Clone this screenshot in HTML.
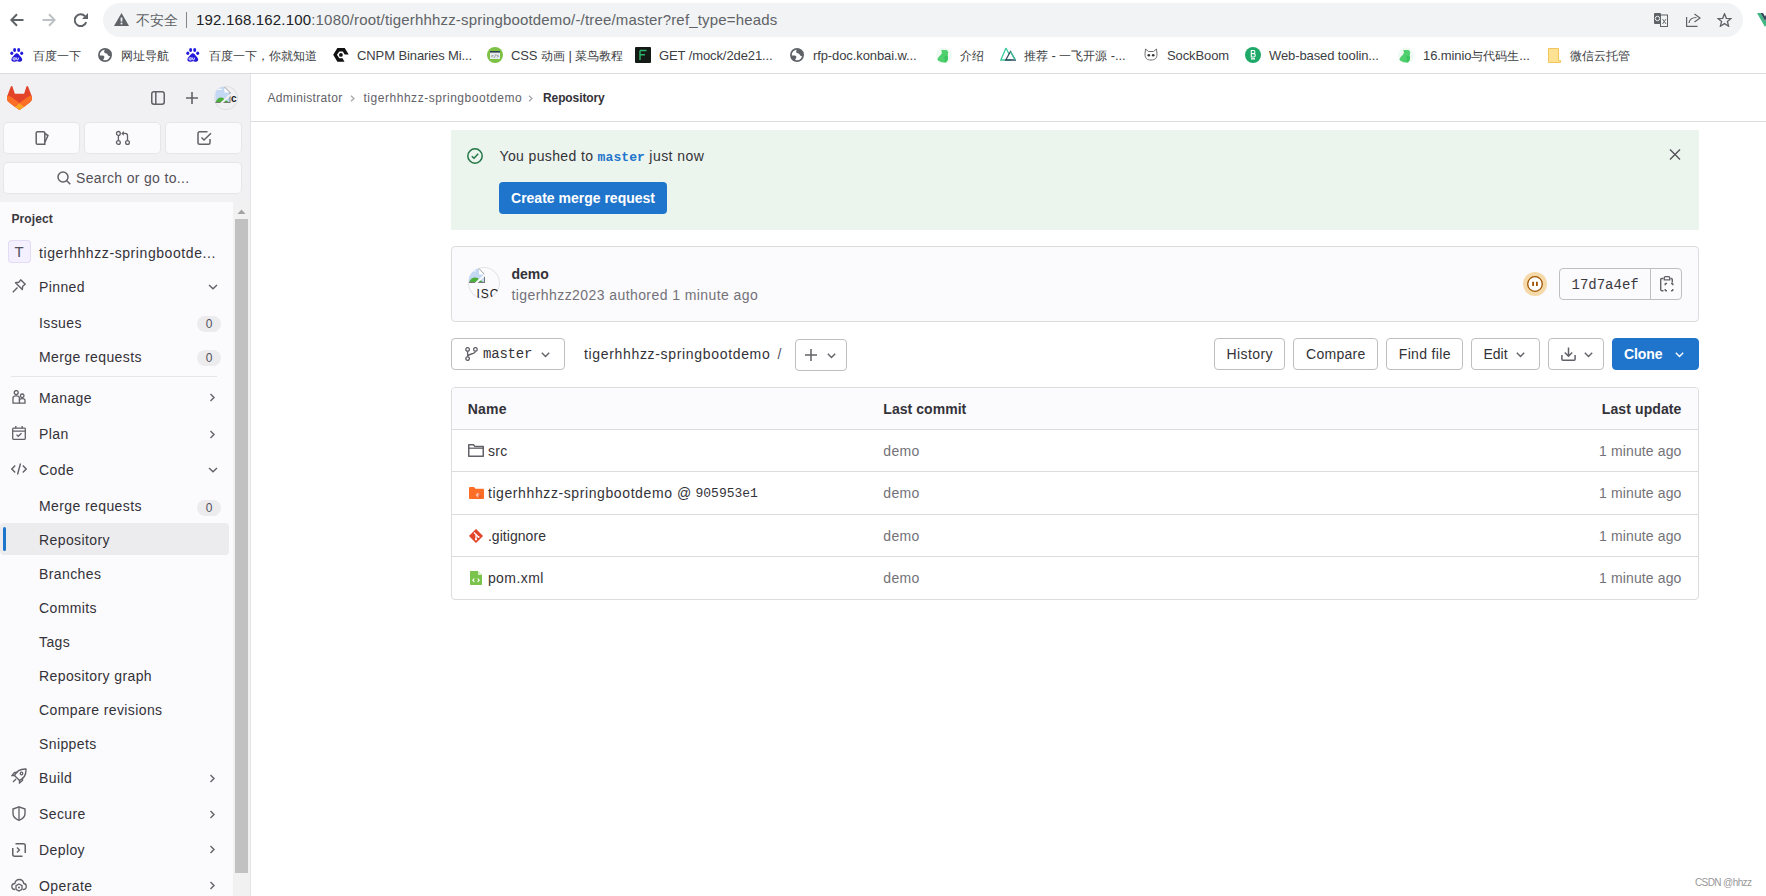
<!DOCTYPE html>
<html><head><meta charset="utf-8">
<style>
*{box-sizing:border-box}
html,body{margin:0;padding:0;width:1766px;height:896px;overflow:hidden;background:#fff;font-family:"Liberation Sans",sans-serif;color:#333238}
.a{position:absolute;white-space:nowrap}
svg{display:block}
/* browser chrome */
#chrome{position:absolute;left:0;top:0;width:1766px;height:74px;background:#fff;border-bottom:1px solid #dadce0}
#omni{position:absolute;left:103px;top:3px;width:1640px;height:34px;border-radius:17px;background:#f1f3f4}
.bm{position:absolute;top:47px;font-size:13px;letter-spacing:-0.1px;color:#3c4043;white-space:nowrap;line-height:18px}
.cj{font-size:12px;letter-spacing:0}
.bmi{position:absolute;top:48px}
/* sidebar */
#sb{position:absolute;left:0;top:74px;width:251px;height:822px;background:#f1f1f3;border-right:1px solid #e4e4e7}
.sbtn{position:absolute;top:49px;height:30px;width:75px;background:#fbfafd;border-radius:4px;box-shadow:0 0 0 1px #e6e6ea}
#panel{position:absolute;left:0;top:128px;width:233px;height:694px;background:#fbfafd}
.ni{position:absolute;left:39px;font-size:14px;color:#333238;white-space:nowrap;line-height:16px}
.badge{position:absolute;left:197px;width:24px;height:16px;border-radius:8px;background:#ececef;font-size:12px;color:#535158;text-align:center;line-height:16px}
.ico{position:absolute;left:11px}
.chev{position:absolute;left:207px}
/* main */
.btn{position:absolute;top:338px;height:32px;border:1px solid #bfbfc3;border-radius:4px;background:#fff;font-size:14px;color:#333238;line-height:30px;text-align:center;white-space:nowrap}
</style></head><body>

<div id="chrome">
  <svg class="a" style="left:10px;top:13px" width="14" height="14" viewBox="0 0 14 14"><path d="M13.5 7H1.5M7 1.3L1.3 7 7 12.7" fill="none" stroke="#5f6368" stroke-width="2"/></svg>
  <svg class="a" style="left:42px;top:13px" width="14" height="14" viewBox="0 0 14 14"><path d="M0.5 7H12.5M7 1.3L12.7 7 7 12.7" fill="none" stroke="#bdc1c6" stroke-width="2"/></svg>
  <svg class="a" style="left:74px;top:13px" width="14" height="14" viewBox="0 0 14 14"><path d="M12.2 9.2A5.9 5.9 0 1 1 11 3.2" fill="none" stroke="#5f6368" stroke-width="2"/><path d="M14 0V6H8Z" fill="#5f6368"/></svg>
  <div id="omni">
    <svg class="a" style="left:11px;top:10px" width="15" height="13" viewBox="0 0 15 13"><path d="M7.5 0L15 13H0Z" fill="#5f6368"/><rect x="6.6" y="4.5" width="1.8" height="4" fill="#f1f3f4"/><rect x="6.6" y="9.6" width="1.8" height="1.8" fill="#f1f3f4"/></svg>
    <div class="a" style="left:33px;top:9px;font-size:14px;line-height:16px;color:#5f6368">不安全</div>
    <div class="a" style="left:83px;top:9px;width:1px;height:16px;background:#80868b"></div>
    <div class="a" style="left:93px;top:8px;font-size:15px;line-height:18px;letter-spacing:0.175px;color:#5f6368"><span style="color:#202124">192.168.162.100</span>:1080/root/tigerhhhzz-springbootdemo/-/tree/master?ref_type=heads</div>
    <svg class="a" style="left:1551px;top:10px" width="14" height="14" viewBox="0 0 14 14"><rect x="0" y="0" width="7" height="11" rx="1" fill="#5f6368"/><circle cx="3.5" cy="5.5" r="2.2" fill="none" stroke="#f1f3f4" stroke-width="1"/><rect x="6.5" y="2" width="7" height="11.5" fill="none" stroke="#5f6368" stroke-width="1"/><path d="M8.5 6L12 11M12 6L8.5 11" stroke="#5f6368" stroke-width="0.9"/></svg>
    <svg class="a" style="left:1583px;top:10px" width="15" height="14" viewBox="0 0 15 14"><path d="M0.6 4V13.4H11.5" fill="none" stroke="#5f6368" stroke-width="1.2"/><path d="M3 10C3.5 6 6.5 4.5 10.5 4.5M8.5 1L14 5L8.5 9" fill="none" stroke="#5f6368" stroke-width="1.2"/></svg>
    <svg class="a" style="left:1614px;top:10px" width="15" height="14" viewBox="0 0 15 14"><path d="M7.5 0.8L9.3 5.3 14 5.5 10.4 8.5 11.6 13.2 7.5 10.6 3.4 13.2 4.6 8.5 1 5.5 5.7 5.3Z" fill="none" stroke="#5f6368" stroke-width="1.3" stroke-linejoin="miter"/></svg>
  </div>
  <svg class="a" style="left:1757px;top:13px" width="16" height="14" viewBox="0 0 16 14"><path d="M0 0H3.5L8 8 12.5 0H16L8 14Z" fill="#41b883"/><path d="M3.5 0H6L8 3.5 10 0H12.5L8 8Z" fill="#35495e"/></svg>

  <svg class="bmi" style="left:10px" width="14" height="14" viewBox="0 0 14 14"><ellipse cx="4.6" cy="2" rx="1.5" ry="1.9" fill="#2319dc"/><ellipse cx="8.7" cy="2" rx="1.5" ry="1.9" fill="#2319dc"/><ellipse cx="1.8" cy="5.2" rx="1.5" ry="1.8" fill="#2319dc"/><ellipse cx="11.7" cy="5.2" rx="1.5" ry="1.8" fill="#2319dc"/><path d="M6.9 5.3C5.5 5.3 4.5 6.8 3.5 8 2 9.5 1.4 10.5 1.4 11.8 1.4 13 2.5 13.7 4 13.7 5.5 13.7 6 13.2 6.9 13.2 7.8 13.2 8.5 13.7 10 13.7 11.5 13.7 12.2 12.8 12.2 11.8 12.2 10.5 11.5 9.5 10 8 9 6.8 8.3 5.3 6.9 5.3Z" fill="#2319dc"/><path d="M5.2 9.5V11.9H3.8C3.1 11.9 3 11.3 3 10.7 3 10.1 3.3 9.9 3.8 9.9H5.2M6.6 9.6V11.2C6.6 11.7 6.9 11.9 7.4 11.9 7.9 11.9 8.3 11.7 8.3 11.2V9.6" fill="none" stroke="#fff" stroke-width="0.9"/></svg>
  <div class="bm" style="left:33px"><span class="cj">百度一下</span></div>
  <svg class="bmi" style="left:98px" width="14" height="14" viewBox="0 0 14 14"><circle cx="7" cy="7" r="6.1" fill="none" stroke="#5f6368" stroke-width="1.7"/><path d="M7.5 1C6.5 2 5.8 3.5 6.3 4.6 7 5.6 8.5 5.2 9.2 6 10 7 10.5 8.6 12 8.3L13.5 7.2V4L11 1.5Z" fill="#5f6368"/><path d="M1 7.6H4.6C5.8 7.6 6.6 8.4 6.3 9.6 6 10.6 5.3 11.4 5 12.8L3.5 13 1 10.5Z" fill="#5f6368"/></svg>
  <div class="bm" style="left:121px"><span class="cj">网址导航</span></div>
  <svg class="bmi" style="left:186px" width="14" height="14" viewBox="0 0 14 14"><ellipse cx="4.6" cy="2" rx="1.5" ry="1.9" fill="#2319dc"/><ellipse cx="8.7" cy="2" rx="1.5" ry="1.9" fill="#2319dc"/><ellipse cx="1.8" cy="5.2" rx="1.5" ry="1.8" fill="#2319dc"/><ellipse cx="11.7" cy="5.2" rx="1.5" ry="1.8" fill="#2319dc"/><path d="M6.9 5.3C5.5 5.3 4.5 6.8 3.5 8 2 9.5 1.4 10.5 1.4 11.8 1.4 13 2.5 13.7 4 13.7 5.5 13.7 6 13.2 6.9 13.2 7.8 13.2 8.5 13.7 10 13.7 11.5 13.7 12.2 12.8 12.2 11.8 12.2 10.5 11.5 9.5 10 8 9 6.8 8.3 5.3 6.9 5.3Z" fill="#2319dc"/><path d="M5.2 9.5V11.9H3.8C3.1 11.9 3 11.3 3 10.7 3 10.1 3.3 9.9 3.8 9.9H5.2M6.6 9.6V11.2C6.6 11.7 6.9 11.9 7.4 11.9 7.9 11.9 8.3 11.7 8.3 11.2V9.6" fill="none" stroke="#fff" stroke-width="0.9"/></svg>
  <div class="bm" style="left:209px"><span class="cj">百度一下，你就知道</span></div>
  <svg class="bmi" style="left:333px" width="16" height="14" viewBox="0 0 16 14"><path d="M0.2 6.8L4.4 0.05H11.7L15.7 6.6H11.7L9.8 3.4H6.3L4 6.8 6.3 10.3H9.5L11.5 13.7H4.4Z" fill="#111"/><circle cx="7.9" cy="6.9" r="1.9" fill="#111"/></svg>
  <div class="bm" style="left:357px">CNPM Binaries Mi...</div>
  <svg class="bmi" style="left:487px;top:47px" width="16" height="16" viewBox="0 0 16 16"><circle cx="8" cy="8" r="8" fill="#7cc144"/><rect x="3" y="4" width="10" height="8" fill="#e8ecee"/><rect x="3" y="4" width="10" height="1.6" fill="#2f3f4f"/><text x="8" y="10.8" font-size="4.5" fill="#2f3f4f" text-anchor="middle" font-family="Liberation Mono">&lt;/&gt;</text></svg>
  <div class="bm" style="left:511px">CSS <span class="cj">动画</span> | <span class="cj">菜鸟教程</span></div>
  <svg class="bmi" style="left:635px;top:47px" width="16" height="16" viewBox="0 0 16 16"><rect width="16" height="16" rx="1" fill="#141a16"/><path d="M5 3.5V13M5 3.5H11.5M5 7.8H10" stroke="#2fb36a" stroke-width="1.4" fill="none"/></svg>
  <div class="bm" style="left:659px">GET /mock/2de21...</div>
  <svg class="bmi" style="left:790px" width="14" height="14" viewBox="0 0 14 14"><circle cx="7" cy="7" r="6.1" fill="none" stroke="#5f6368" stroke-width="1.7"/><path d="M7.5 1C6.5 2 5.8 3.5 6.3 4.6 7 5.6 8.5 5.2 9.2 6 10 7 10.5 8.6 12 8.3L13.5 7.2V4L11 1.5Z" fill="#5f6368"/><path d="M1 7.6H4.6C5.8 7.6 6.6 8.4 6.3 9.6 6 10.6 5.3 11.4 5 12.8L3.5 13 1 10.5Z" fill="#5f6368"/></svg>
  <div class="bm" style="left:813px">rfp-doc.konbai.w...</div>
  <svg class="bmi" style="left:936px;top:47px" width="16" height="16" viewBox="0 0 16 16"><circle cx="8" cy="8.5" r="8" fill="#f0f9f2"/><path d="M5.3 3.1H10.7L12.2 5.1 11.8 8C12.3 10 12.2 12.3 11.4 13.8 10.5 15.3 9 15.7 7.8 15.6 5 15.3 2.5 14 1.4 12.7 1.8 11.2 2.8 10 3.6 9.1 4.8 7.8 5.9 7 5.9 5.5Z" fill="#4fcf6e"/><path d="M8.5 9C10 8.5 11.5 9 11.8 10.5 12 12.5 11.3 14.5 9.5 15.4 8 15.8 9 13 8.5 9Z" fill="#3cc45f"/></svg>
  <div class="bm" style="left:960px"><span class="cj">介绍</span></div>
  <svg class="bmi" style="left:1000px;top:47px" width="16" height="14" viewBox="0 0 16 14"><path d="M6 1L0.8 13H11.5" fill="none" stroke="#3cc99c" stroke-width="1.3"/><path d="M6 1L9 7" fill="none" stroke="#3cc99c" stroke-width="1.3"/><path d="M10.5 4.5L15.3 13H5.7Z" fill="none" stroke="#35495e" stroke-width="1.3"/><path d="M10.5 4.5L15.3 13" fill="none" stroke="#3cc99c" stroke-width="1.3"/></svg>
  <div class="bm" style="left:1024px"><span class="cj">推荐</span> - <span class="cj">一飞开源</span> -...</div>
  <svg class="bmi" style="left:1144px" width="14" height="14" viewBox="0 0 14 14"><path d="M1.5 1L4.5 3.5H9.5L12.5 1 13 6C13 10.5 11 12 7 12S1 10.5 1 6Z" fill="#fff" stroke="#707070" stroke-width="1"/><ellipse cx="4.8" cy="7.3" rx="1.3" ry="1.2" fill="#333"/><ellipse cx="9.2" cy="7.3" rx="1.3" ry="1.2" fill="#333"/></svg>
  <div class="bm" style="left:1167px">SockBoom</div>
  <svg class="bmi" style="left:1245px;top:47px" width="16" height="16" viewBox="0 0 16 16"><circle cx="8" cy="8" r="8" fill="#1ea968"/><path d="M6.3 3.5H8.8C10.2 3.5 10.2 6.6 8.8 6.6H6.3ZM6.3 6.6H9C10.6 6.6 10.6 10 9 10H6.3Z" fill="none" stroke="#fff" stroke-width="1.1"/><rect x="6" y="11.2" width="4" height="1.3" fill="#fff"/></svg>
  <div class="bm" style="left:1269px">Web-based toolin...</div>
  <svg class="bmi" style="left:1398px;top:47px" width="16" height="16" viewBox="0 0 16 16"><circle cx="8" cy="8.5" r="8" fill="#f0f9f2"/><path d="M5.3 3.1H10.7L12.2 5.1 11.8 8C12.3 10 12.2 12.3 11.4 13.8 10.5 15.3 9 15.7 7.8 15.6 5 15.3 2.5 14 1.4 12.7 1.8 11.2 2.8 10 3.6 9.1 4.8 7.8 5.9 7 5.9 5.5Z" fill="#4fcf6e"/><path d="M8.5 9C10 8.5 11.5 9 11.8 10.5 12 12.5 11.3 14.5 9.5 15.4 8 15.8 9 13 8.5 9Z" fill="#3cc45f"/></svg>
  <div class="bm" style="left:1423px">16.minio<span class="cj">与代码生</span>...</div>
  <svg class="bmi" style="left:1548px" width="13" height="15" viewBox="0 0 13 15"><path d="M0.5 0.5H10.5V12.5H12.5V14.5H0.5Z" fill="#fde293" stroke="#f2c55c" stroke-width="1"/></svg>
  <div class="bm" style="left:1570px"><span class="cj">微信云托管</span></div>
</div>

<div id="sb">
  <svg class="a" style="left:7px;top:11.5px" width="25" height="24" viewBox="0 0 25 24"><path fill="#E24329" d="m24.507 9.5-.034-.09L21.082.562a.896.896 0 0 0-1.694.091l-2.29 7.01H7.825L5.535.653a.898.898 0 0 0-1.694-.09L.451 9.411.416 9.5a6.297 6.297 0 0 0 2.09 7.278l.012.01.03.022 5.160 3.867 2.560 1.935 1.554 1.176a1.051 1.051 0 0 0 1.268 0l1.555-1.176 2.560-1.935 5.197-3.890.014-.01A6.297 6.297 0 0 0 24.507 9.5Z"/><path fill="#FC6D26" d="m24.507 9.5-.034-.09a11.440 11.440 0 0 0-4.560 2.051l-7.447 5.632 4.742 3.584 5.197-3.890.014-.01A6.297 6.297 0 0 0 24.507 9.5Z"/><path fill="#FCA326" d="m7.707 20.677 2.560 1.935 1.555 1.176a1.051 1.051 0 0 0 1.268 0l1.555-1.176 2.560-1.935-4.743-3.584-4.755 3.584Z"/><path fill="#FC6D26" d="M5.010 11.461a11.430 11.430 0 0 0-4.560-2.050L.416 9.500a6.297 6.297 0 0 0 2.090 7.278l.012.010.030.022 5.160 3.867 4.745-3.584-7.444-5.632Z"/></svg>
  <svg class="a" style="left:151px;top:17px" width="14" height="14" viewBox="0 0 14 14"><rect x="0.75" y="0.75" width="12.5" height="12.5" rx="2.2" fill="none" stroke="#626168" stroke-width="1.5"/><path d="M4.8 1V13" stroke="#626168" stroke-width="1.5"/></svg>
  <svg class="a" style="left:186px;top:18px" width="12" height="12" viewBox="0 0 12 12"><path d="M6 0V12M0 6H12" stroke="#626168" stroke-width="1.6"/></svg>
  <div class="a" style="left:214px;top:12px;width:24px;height:24px;border-radius:12px;box-shadow:inset 0 0 0 1px #e0e0e4;overflow:hidden">
    <svg class="a" style="left:0;top:0" width="24" height="24" viewBox="0 0 24 24"><path d="M1.5 1H10.5L16 6.5V16.5H1.5Z" fill="#c4d8f4"/><path d="M3 4C3 3 4.5 2.5 5.5 3 6.5 2 8 2.5 8 4Z" fill="#fff" opacity="0.8"/><path d="M10.5 1V6.5H16" fill="#fff"/><path d="M10.5 1L16 6.5" stroke="#888" stroke-width="0.8"/><path d="M1.5 16.5C3 12 7 10 10.5 13L8 16.5Z" fill="#4caf3b"/><path d="M11.5 14L15.5 16.5H9.5Z" fill="#4caf3b"/><path d="M1.5 16.5H16.3M16 6.5V16.5" stroke="#777" stroke-width="1"/><path d="M6.5 18L17 8" stroke="#f1f1f3" stroke-width="2"/><text x="17" y="15.5" font-size="10" font-weight="bold" fill="#222" font-family="Liberation Sans">c</text></svg>
  </div>
  <div class="sbtn" style="left:4px"><svg class="a" style="left:31px;top:8px" width="14" height="14" viewBox="0 0 14 14"><path d="M2.5 0.8H8.5C9.3 0.8 9.8 1.3 9.8 2.1V13.2H2.5C1.7 13.2 1.2 12.7 1.2 11.9V2.1C1.2 1.3 1.7 0.8 2.5 0.8Z" fill="none" stroke="#626168" stroke-width="1.5"/><path d="M9.8 2.5L13 4.5 10 11" fill="none" stroke="#626168" stroke-width="1.5" stroke-linejoin="round"/></svg></div>
  <div class="sbtn" style="left:85px"><svg class="a" style="left:30px;top:7px" width="16" height="16" viewBox="0 0 16 16"><circle cx="3.4" cy="3.4" r="1.9" fill="none" stroke="#626168" stroke-width="1.3"/><circle cx="3.4" cy="12.5" r="1.9" fill="none" stroke="#626168" stroke-width="1.3"/><circle cx="12.5" cy="12.5" r="1.9" fill="none" stroke="#626168" stroke-width="1.3"/><path d="M3.4 5.3V10.6M12.5 10.6V5.6C12.5 4.2 11.6 3.4 10.2 3.4H8" fill="none" stroke="#626168" stroke-width="1.3"/><path d="M6.2 3.4L8.8 1V5.8Z" fill="#626168"/></svg></div>
  <div class="sbtn" style="left:166px"><svg class="a" style="left:31px;top:8px" width="15" height="14" viewBox="0 0 15 14"><path d="M10.5 0.8H2.5C1.6 0.8 1 1.4 1 2.3V11.7C1 12.6 1.6 13.2 2.5 13.2H11.5C12.4 13.2 13 12.6 13 11.7V8" fill="none" stroke="#626168" stroke-width="1.5"/><path d="M4.5 6.5L7 9 14 2.2" fill="none" stroke="#626168" stroke-width="1.5"/></svg></div>
  <div class="a" style="left:4px;top:89px;width:237px;height:30px;background:#fbfafd;border-radius:4px;box-shadow:0 0 0 1px #e6e6ea"></div>
  <svg class="a" style="left:57px;top:97px" width="14" height="14" viewBox="0 0 14 14"><circle cx="6" cy="6" r="5" fill="none" stroke="#626168" stroke-width="1.5"/><path d="M9.5 9.5L13.3 13.3" stroke="#626168" stroke-width="1.5"/></svg>
  <div class="a" style="left:76px;top:96px;font-size:14px;line-height:16px;letter-spacing:0.34px;color:#535158">Search or go to...</div>
  <div id="panel">
    <div class="a" style="left:11.5px;top:10px;font-size:12px;font-weight:bold;line-height:14px;letter-spacing:0.1px;color:#3a3940">Project</div>
  </div>
  <div class="a" style="left:7.5px;top:166px;width:23px;height:23px;border-radius:4px;background:#f4f0ff;box-shadow:inset 0 0 0 1px #e3dcf5;font-size:15px;line-height:23px;text-align:center;color:#535158">T</div>
  <div class="ni" style="top:170.6px;letter-spacing:0.58px">tigerhhhzz-springbootde...</div>
  <svg class="a" style="left:12px;top:205px" width="14" height="14" viewBox="0 0 14 14"><path d="M8.7 0.8L13.2 5.3 10.7 7.2 10.3 10.5 3.5 3.7 6.8 3.3Z" fill="none" stroke="#626168" stroke-width="1.4" stroke-linejoin="round"/><path d="M5.5 8.5L0.8 13.2" stroke="#626168" stroke-width="1.4"/></svg>
  <div class="ni" style="top:205px;letter-spacing:0.4px">Pinned</div>
  <svg class="a" style="left:208px;top:210.3px" width="10" height="6" viewBox="0 0 10 6"><path d="M1 1L5 4.8 9 1" fill="none" stroke="#626168" stroke-width="1.4"/></svg>
  <div class="ni" style="top:241px;letter-spacing:0.4px">Issues</div>
  <div class="badge" style="top:242px">0</div>
  <div class="ni" style="top:275.3px;letter-spacing:0.4px">Merge requests</div>
  <div class="badge" style="top:276px">0</div>
  <div class="a" style="left:11px;top:302px;width:206px;height:1px;background:#e6e6ea"></div>
  <svg class="a" style="left:12px;top:316px" width="14" height="14" viewBox="0 0 14 14"><circle cx="4.2" cy="2.6" r="2" fill="none" stroke="#626168" stroke-width="1.3"/><path d="M1 13.2V7.8C1 6.5 2 5.8 4.2 5.8S7.4 6.5 7.4 7.8V13.2Z" fill="none" stroke="#626168" stroke-width="1.3" stroke-linejoin="round"/><circle cx="10.2" cy="5.8" r="1.8" fill="none" stroke="#626168" stroke-width="1.3"/><path d="M7.4 13.2H13V10.5C13 9.3 12 8.6 10.2 8.6S7.4 9.3 7.4 10.5" fill="none" stroke="#626168" stroke-width="1.3" stroke-linejoin="round"/></svg>
  <div class="ni" style="top:316px;letter-spacing:0.4px">Manage</div>
  <svg class="a" style="left:209px;top:319.4px" width="7" height="9" viewBox="0 0 7 9"><path d="M1.5 1L5 4.5 1.5 8" fill="none" stroke="#626168" stroke-width="1.4"/></svg>
  <svg class="a" style="left:12px;top:352px" width="14" height="14" viewBox="0 0 14 14"><rect x="0.7" y="2.2" width="12.6" height="11.1" rx="0.8" fill="none" stroke="#626168" stroke-width="1.3"/><path d="M0.7 5.2H13.3M3.8 0V2.5M10.2 0V2.5" stroke="#626168" stroke-width="1.3"/><path d="M4.5 8.6L6.3 10.3 9.5 7.2" fill="none" stroke="#626168" stroke-width="1.3"/></svg>
  <div class="ni" style="top:352px;letter-spacing:0.4px">Plan</div>
  <svg class="a" style="left:209px;top:355.5px" width="7" height="9" viewBox="0 0 7 9"><path d="M1.5 1L5 4.5 1.5 8" fill="none" stroke="#626168" stroke-width="1.4"/></svg>
  <svg class="a" style="left:11px;top:389px" width="16" height="12" viewBox="0 0 16 12"><path d="M4.2 2.5L0.8 6 4.2 9.5M11.8 2.5L15.2 6 11.8 9.5M9.5 0.5L6.5 11.5" fill="none" stroke="#626168" stroke-width="1.4"/></svg>
  <div class="ni" style="top:387.7px;letter-spacing:0.4px">Code</div>
  <svg class="a" style="left:208px;top:392.9px" width="10" height="6" viewBox="0 0 10 6"><path d="M1 1L5 4.8 9 1" fill="none" stroke="#626168" stroke-width="1.4"/></svg>
  <div class="ni" style="top:424px;letter-spacing:0.4px">Merge requests</div>
  <div class="badge" style="top:425.5px">0</div>
  <div class="a" style="left:0px;top:449px;width:229px;height:32px;border-radius:4px;background:#ececef"></div>
  <div class="a" style="left:3px;top:453px;width:3px;height:23.5px;border-radius:2px;background:#1f75cb"></div>
  <div class="ni" style="top:458px;letter-spacing:0.4px">Repository</div>
  <div class="ni" style="top:492px;letter-spacing:0.4px">Branches</div>
  <div class="ni" style="top:526px;letter-spacing:0.4px">Commits</div>
  <div class="ni" style="top:559.6px;letter-spacing:0.4px">Tags</div>
  <div class="ni" style="top:593.6px;letter-spacing:0.4px">Repository graph</div>
  <div class="ni" style="top:628px;letter-spacing:0.4px">Compare revisions</div>
  <div class="ni" style="top:662px;letter-spacing:0.4px">Snippets</div>
  <svg class="a" style="left:11px;top:694px" width="16" height="16" viewBox="0 0 16 16"><path d="M6 10L3.5 7.5C5.5 3 9.5 0.8 15 1 15.2 6.5 13 10.5 8.5 12.5Z" fill="none" stroke="#626168" stroke-width="1.4" stroke-linejoin="round"/><circle cx="10.5" cy="5.5" r="1.3" fill="none" stroke="#626168" stroke-width="1.3"/><path d="M3.5 7.5L1 7.5 3.5 4.5H6.5M8.5 12.5V15L11.5 12.5V9.5M5 11L2 14" fill="none" stroke="#626168" stroke-width="1.3"/></svg>
  <div class="ni" style="top:696px;letter-spacing:0.4px">Build</div>
  <svg class="a" style="left:209px;top:699.5px" width="7" height="9" viewBox="0 0 7 9"><path d="M1.5 1L5 4.5 1.5 8" fill="none" stroke="#626168" stroke-width="1.4"/></svg>
  <svg class="a" style="left:12px;top:732px" width="14" height="15" viewBox="0 0 14 15"><path d="M7 0.8L13 3V7.5C13 10.5 10.5 13 7 14.3 3.5 13 1 10.5 1 7.5V3Z" fill="none" stroke="#626168" stroke-width="1.4" stroke-linejoin="round"/><path d="M7 0.8V14.3" stroke="#626168" stroke-width="1.3"/></svg>
  <div class="ni" style="top:732px;letter-spacing:0.4px">Secure</div>
  <svg class="a" style="left:209px;top:735.5px" width="7" height="9" viewBox="0 0 7 9"><path d="M1.5 1L5 4.5 1.5 8" fill="none" stroke="#626168" stroke-width="1.4"/></svg>
  <svg class="a" style="left:12px;top:769px" width="14" height="14" viewBox="0 0 14 14"><path d="M0.75 5V11.3C0.75 12.4 1.6 13.25 2.7 13.25H10.5" fill="none" stroke="#626168" stroke-width="1.5"/><path d="M3.5 0.75H11.3C12.4 0.75 13.25 1.6 13.25 2.7V10" fill="none" stroke="#626168" stroke-width="1.5"/><path d="M5 4.6L7.4 7 5 9.4" fill="none" stroke="#626168" stroke-width="1.4"/></svg>
  <div class="ni" style="top:768px;letter-spacing:0.4px">Deploy</div>
  <svg class="a" style="left:209px;top:771.3px" width="7" height="9" viewBox="0 0 7 9"><path d="M1.5 1L5 4.5 1.5 8" fill="none" stroke="#626168" stroke-width="1.4"/></svg>
  <svg class="a" style="left:11px;top:804px" width="16" height="16" viewBox="0 0 16 16"><path d="M4 11.5C1.8 11.5 0.8 10 0.8 8.5S2 5.5 3.8 5.5C4.3 3 6 1.5 8.3 1.5S12.3 3 12.8 5.5C14.5 5.7 15.3 7 15.3 8.5S14 11.5 12 11.5" fill="none" stroke="#626168" stroke-width="1.3"/><path d="M8 6L11 7.7V11.3L8 13 5 11.3V7.7Z" fill="none" stroke="#626168" stroke-width="1.3"/><circle cx="8" cy="9.5" r="1" fill="#626168"/></svg>
  <div class="ni" style="top:804px;letter-spacing:0.4px">Operate</div>
  <svg class="a" style="left:209px;top:807.3px" width="7" height="9" viewBox="0 0 7 9"><path d="M1.5 1L5 4.5 1.5 8" fill="none" stroke="#626168" stroke-width="1.4"/></svg>
  <div class="a" style="left:233px;top:128px;width:17px;height:694px;background:#f1f1f1"></div>
  <div class="a" style="left:235px;top:145px;width:13px;height:654px;background:#c1c1c1"></div>
  <svg class="a" style="left:237px;top:135px" width="9" height="5" viewBox="0 0 9 5"><path d="M0.5 5L4.5 0.5 8.5 5Z" fill="#a3a3a3"/></svg>
</div>

<div id="main">
  <div class="a" style="left:251px;top:121px;width:1515px;height:1px;background:#dcdcde"></div>
  <div class="a" style="left:267.5px;top:89.5px;font-size:12px;line-height:16px;letter-spacing:0.33px;color:#626168">Administrator</div>
  <svg class="a" style="left:349.5px;top:95px" width="6" height="7" viewBox="0 0 6 7"><path d="M1 0.8L4 3.5 1 6.2" fill="none" stroke="#a4a3a8" stroke-width="1.2"/></svg>
  <div class="a" style="left:363.5px;top:89.5px;font-size:12px;line-height:16px;letter-spacing:0.53px;color:#626168">tigerhhhzz-springbootdemo</div>
  <svg class="a" style="left:528px;top:95px" width="6" height="7" viewBox="0 0 6 7"><path d="M1 0.8L4 3.5 1 6.2" fill="none" stroke="#a4a3a8" stroke-width="1.2"/></svg>
  <div class="a" style="left:543px;top:89.5px;font-size:12px;font-weight:bold;line-height:16px;letter-spacing:-0.1px;color:#333238">Repository</div>

  <div class="a" style="left:451px;top:130px;width:1248px;height:100px;background:#ecf4ee"></div>
  <svg class="a" style="left:467px;top:148px" width="16" height="16" viewBox="0 0 16 16"><circle cx="8" cy="8" r="7.2" fill="none" stroke="#217645" stroke-width="1.5"/><path d="M4.8 8.2L7 10.3 11.2 5.8" fill="none" stroke="#217645" stroke-width="1.5"/></svg>
  <div class="a" style="left:499.5px;top:147.8px;font-size:14px;line-height:16px;color:#333238"><span style="letter-spacing:0.37px">You pushed to </span><span style="font-family:'Liberation Mono',monospace;font-size:13px;font-weight:bold;letter-spacing:0.1px;color:#1f75cb">master</span><span style="letter-spacing:0.45px"> just now</span></div>
  <svg class="a" style="left:1669px;top:149px" width="12" height="11" viewBox="0 0 12 11"><path d="M1 0.5L11 10.5M11 0.5L1 10.5" stroke="#535158" stroke-width="1.4"/></svg>
  <div class="a" style="left:499px;top:182px;width:168px;height:32px;border-radius:4px;background:#1f75cb;color:#fff;font-size:14px;font-weight:bold;line-height:32px;text-align:center">Create merge request</div>

  <div class="a" style="left:451px;top:246px;width:1248px;height:76px;background:#fbfafd;border:1px solid #dcdcde;border-radius:4px"></div>
  <div class="a" style="left:468px;top:267px;width:32px;height:32px;border-radius:16px;box-shadow:inset 0 0 0 1px #e4e4e8;overflow:hidden">
    <svg class="a" style="left:0;top:0" width="32" height="32" viewBox="0 0 32 32"><path d="M1 2H11L16.5 7.5V15.5H1Z" fill="#c4d8f4"/><path d="M3 4.5C3 3.5 4.5 3 5.5 3.5 6.5 2.5 8 3 8 4.5Z" fill="#fff" opacity="0.8"/><path d="M11 1.5V7.5H16.5" fill="#fff"/><path d="M11 1.5L16.5 7.5" stroke="#888" stroke-width="0.8"/><path d="M1 15.5C2.5 11 7 9 11 12L8 15.5Z" fill="#4caf3b"/><path d="M12 13L16 15.5H10Z" fill="#4caf3b"/><path d="M1 15.5H17M16.5 7.5V15.5" stroke="#777" stroke-width="1"/><path d="M7 17L17.5 7.5" stroke="#fbfafd" stroke-width="2"/><text x="8.5" y="31" font-size="12" fill="#222" font-family="Liberation Sans" letter-spacing="1">ISC</text></svg>
  </div>
  <div class="a" style="left:511.5px;top:266.3px;font-size:14px;font-weight:bold;line-height:16px;color:#333238">demo</div>
  <div class="a" style="left:511.5px;top:287px;font-size:14px;line-height:16px;letter-spacing:0.42px;color:#737278">tigerhhzz2023 authored 1 minute ago</div>
  <div class="a" style="left:1523px;top:272px;width:24px;height:24px;border-radius:12px;background:#f5d9a8"></div>
  <svg class="a" style="left:1527px;top:276px" width="16" height="16" viewBox="0 0 16 16"><circle cx="8" cy="8" r="7.3" fill="#fff" stroke="#9e5400" stroke-width="1.3"/><path d="M6.1 5.8V10.1M9.9 5.8V10.1" stroke="#9e5400" stroke-width="1.8"/></svg>
  <div class="a" style="left:1559px;top:268px;width:123px;height:32px;border:1px solid #bfbfc3;border-radius:4px;background:transparent"></div>
  <div class="a" style="left:1650px;top:268px;width:1px;height:32px;background:#bfbfc3"></div>
  <div class="a" style="left:1571.5px;top:277.3px;font-family:'Liberation Mono',monospace;font-size:14px;line-height:16px;color:#3a3940">17d7a4ef</div>
  <svg class="a" style="left:1659.5px;top:276px" width="14" height="16" viewBox="0 0 14 16"><path d="M3.5 2.5H1.8C1.1 2.5 0.7 2.9 0.7 3.6V13.6C0.7 14.3 1.1 14.7 1.8 14.7H3.5M10.5 2.5H11.2C11.9 2.5 12.3 2.9 12.3 3.6V6.5" fill="none" stroke="#626168" stroke-width="1.4"/><path d="M4.3 3.8V1.8C4.3 1.1 4.7 0.7 5.4 0.7H8.6C9.3 0.7 9.7 1.1 9.7 1.8V3.8Z" fill="none" stroke="#626168" stroke-width="1.3"/><path d="M5.2 9.3V8.2C5.2 7.8 5.5 7.5 5.9 7.5H7M11 7.5H12.1C12.5 7.5 12.8 7.8 12.8 8.2V9.3M12.8 13V14.1C12.8 14.5 12.5 14.8 12.1 14.8H11M7 14.8H5.9C5.5 14.8 5.2 14.5 5.2 14.1V13" fill="none" stroke="#626168" stroke-width="1.4"/></svg>
  <div class="a" style="left:451px;top:338px;width:114px;height:32px;border:1px solid #bfbfc3;border-radius:4px;background:#fff"></div>
  <svg class="a" style="left:464.5px;top:347px" width="13" height="14" viewBox="0 0 13 14"><circle cx="2.6" cy="2.4" r="1.8" fill="none" stroke="#626168" stroke-width="1.3"/><circle cx="10.4" cy="2.4" r="1.8" fill="none" stroke="#626168" stroke-width="1.3"/><circle cx="2.6" cy="11.6" r="1.8" fill="none" stroke="#626168" stroke-width="1.3"/><path d="M2.6 4.2V9.8M10.4 4.2C10.4 7.5 2.6 6.5 2.6 9.5" fill="none" stroke="#626168" stroke-width="1.3"/></svg>
  <div class="a" style="left:483px;top:346px;font-family:'Liberation Mono',monospace;font-size:14px;line-height:16px;letter-spacing:-0.2px;color:#333238">master</div>
  <svg class="a" style="left:540.8px;top:351.5px" width="9" height="6" viewBox="0 0 9 6"><path d="M0.8 0.8L4.5 4.5 8.2 0.8" fill="none" stroke="#626168" stroke-width="1.4"/></svg>
  <div class="a" style="left:584px;top:346px;font-size:14px;line-height:16px;letter-spacing:0.67px;color:#333238;">tigerhhhzz-springbootdemo</div>
  <div class="a" style="left:777.5px;top:346px;font-size:14px;line-height:16px;letter-spacing:0px;color:#535158;">/</div>
  <div class="a" style="left:795px;top:339px;width:52px;height:32px;border:1px solid #bfbfc3;border-radius:4px;background:#fff"></div>
  <svg class="a" style="left:805px;top:349px" width="12" height="12" viewBox="0 0 12 12"><path d="M6 0V12M0 6H12" stroke="#626168" stroke-width="1.5"/></svg>
  <svg class="a" style="left:826.5px;top:352.5px" width="9" height="6" viewBox="0 0 9 6"><path d="M0.8 0.8L4.5 4.5 8.2 0.8" fill="none" stroke="#626168" stroke-width="1.4"/></svg>
  <div class="a" style="left:1214px;top:338px;width:71px;height:32px;border:1px solid #bfbfc3;border-radius:4px;background:#fff"></div>
  <div class="a" style="left:1226.5px;top:346px;font-size:14px;line-height:16px;letter-spacing:0.42px;color:#333238;">History</div>
  <div class="a" style="left:1293px;top:338px;width:85px;height:32px;border:1px solid #bfbfc3;border-radius:4px;background:#fff"></div>
  <div class="a" style="left:1306px;top:346px;font-size:14px;line-height:16px;letter-spacing:0.28px;color:#333238;">Compare</div>
  <div class="a" style="left:1386px;top:338px;width:77px;height:32px;border:1px solid #bfbfc3;border-radius:4px;background:#fff"></div>
  <div class="a" style="left:1398.8px;top:346px;font-size:14px;line-height:16px;letter-spacing:0.33px;color:#333238;">Find file</div>
  <div class="a" style="left:1471px;top:338px;width:69px;height:32px;border:1px solid #bfbfc3;border-radius:4px;background:#fff"></div>
  <div class="a" style="left:1483.4px;top:346px;font-size:14px;line-height:16px;letter-spacing:0px;color:#333238;">Edit</div>
  <svg class="a" style="left:1515.5px;top:351.8px" width="9" height="6" viewBox="0 0 9 6"><path d="M0.8 0.8L4.5 4.5 8.2 0.8" fill="none" stroke="#626168" stroke-width="1.4"/></svg>
  <div class="a" style="left:1548px;top:338px;width:56px;height:32px;border:1px solid #bfbfc3;border-radius:4px;background:#fff"></div>
  <svg class="a" style="left:1560.5px;top:347px" width="15" height="14" viewBox="0 0 15 14"><path d="M7.5 0.5V9M3.8 5.5L7.5 9.2 11.2 5.5M0.9 8V12.2C0.9 12.8 1.3 13.2 1.9 13.2H13.1C13.7 13.2 14.1 12.8 14.1 12.2V8" fill="none" stroke="#626168" stroke-width="1.5"/></svg>
  <svg class="a" style="left:1583.8px;top:351.8px" width="9" height="6" viewBox="0 0 9 6"><path d="M0.8 0.8L4.5 4.5 8.2 0.8" fill="none" stroke="#626168" stroke-width="1.4"/></svg>
  <div class="a" style="left:1612px;top:338px;width:87px;height:32px;border:1px solid #1f75cb;border-radius:4px;background:#1f75cb"></div>
  <div class="a" style="left:1624px;top:346px;font-size:14px;line-height:16px;letter-spacing:-0.1px;color:#fff;font-weight:bold">Clone</div>
  <svg class="a" style="left:1675px;top:351.8px" width="9" height="6" viewBox="0 0 9 6"><path d="M0.8 0.8L4.5 4.5 8.2 0.8" fill="none" stroke="#fff" stroke-width="1.4"/></svg>
  <div class="a" style="left:451px;top:387px;width:1248px;height:213px;border:1px solid #dcdcde;border-radius:4px;background:#fff;overflow:hidden"><div style="height:42px;background:#fbfafd;border-bottom:1px solid #dcdcde"></div></div>
  <div class="a" style="left:452px;top:471px;width:1246px;height:1px;background:#dcdcde"></div>
  <div class="a" style="left:452px;top:514px;width:1246px;height:1px;background:#dcdcde"></div>
  <div class="a" style="left:452px;top:556px;width:1246px;height:1px;background:#dcdcde"></div>
  <div class="a" style="left:467.8px;top:401px;font-size:14px;line-height:16px;letter-spacing:0.2px;color:#333238;font-weight:bold">Name</div>
  <div class="a" style="left:883.3px;top:401px;font-size:14px;line-height:16px;letter-spacing:0.05px;color:#333238;font-weight:bold">Last commit</div>
  <div class="a" style="left:1400px;top:401px;width:281.5px;text-align:right;font-size:14px;line-height:16px;font-weight:bold;letter-spacing:0.1px;color:#333238">Last update</div>
  <div class="a" style="left:883.3px;top:443px;font-size:14px;line-height:16px;letter-spacing:0.3px;color:#737278;">demo</div>
  <div class="a" style="left:1400px;top:443px;width:1681.5px;font-size:14px;line-height:16px;letter-spacing:0.12px;color:#737278;left:1500px;width:181.5px;text-align:right">1 minute ago</div>
  <div class="a" style="left:883.3px;top:485px;font-size:14px;line-height:16px;letter-spacing:0.3px;color:#737278;">demo</div>
  <div class="a" style="left:1400px;top:485px;width:1681.5px;font-size:14px;line-height:16px;letter-spacing:0.12px;color:#737278;left:1500px;width:181.5px;text-align:right">1 minute ago</div>
  <div class="a" style="left:883.3px;top:528px;font-size:14px;line-height:16px;letter-spacing:0.3px;color:#737278;">demo</div>
  <div class="a" style="left:1400px;top:528px;width:1681.5px;font-size:14px;line-height:16px;letter-spacing:0.12px;color:#737278;left:1500px;width:181.5px;text-align:right">1 minute ago</div>
  <div class="a" style="left:883.3px;top:570px;font-size:14px;line-height:16px;letter-spacing:0.3px;color:#737278;">demo</div>
  <div class="a" style="left:1400px;top:570px;width:1681.5px;font-size:14px;line-height:16px;letter-spacing:0.12px;color:#737278;left:1500px;width:181.5px;text-align:right">1 minute ago</div>
  <svg class="a" style="left:468px;top:444px" width="16" height="13" viewBox="0 0 16 13"><path d="M0.75 0.75H5.5L7 2.6H15.25V12.25H0.75Z" fill="none" stroke="#626168" stroke-width="1.5" stroke-linejoin="round"/><path d="M0.75 4.2H15.25" stroke="#626168" stroke-width="1.3"/></svg>
  <div class="a" style="left:487.9px;top:443px;font-size:14px;line-height:16px;letter-spacing:0.3px;color:#333238;">src</div>
  <svg class="a" style="left:469px;top:487px" width="15" height="13" viewBox="0 0 15 13"><path d="M0 1C0 0.5 0.5 0 1 0H5L6.5 1.8H14C14.5 1.8 15 2.3 15 2.8V11C15 11.5 14.5 12 14 12H1C0.5 12 0 11.5 0 11Z" fill="#fc6d26"/><path d="M9 5.5L11.5 8 9 10.5 6.5 8Z" fill="#fff" opacity="0.6"/><path d="M10 6.5V10M11 7.5V10.5" stroke="#e24329" stroke-width="0.8"/></svg>
  <div class="a" style="left:487.9px;top:485px;font-size:14px;line-height:16px;letter-spacing:0.6px;color:#333238;">tigerhhhzz-springbootdemo</div>
  <div class="a" style="left:677px;top:485px;font-size:14px;line-height:16px;letter-spacing:0px;color:#333238;">@</div>
  <div class="a" style="left:695.5px;top:486px;font-family:'Liberation Mono',monospace;font-size:13px;line-height:16px;letter-spacing:0px;color:#333238">905953e1</div>
  <svg class="a" style="left:469px;top:529px" width="14" height="14" viewBox="0 0 14 14"><path d="M7 0.3L13.7 7 7 13.7 0.3 7Z" fill="#e24329" stroke="#e24329" stroke-width="0.6" stroke-linejoin="round"/><path d="M5 3.5L7 5.5V10.5M7 5.5L9.5 8" stroke="#fff" stroke-width="1.2" fill="none"/><circle cx="7" cy="10.3" r="1.1" fill="#fff"/><circle cx="9.5" cy="8" r="1.1" fill="#fff"/></svg>
  <div class="a" style="left:487.9px;top:528px;font-size:14px;line-height:16px;letter-spacing:0.05px;color:#333238;">.gitignore</div>
  <svg class="a" style="left:470px;top:571px" width="12" height="14" viewBox="0 0 12 14"><path d="M1 0H8L12 4V13C12 13.6 11.6 14 11 14H1C0.4 14 0 13.6 0 13V1C0 0.4 0.4 0 1 0Z" fill="#7ac44d"/><path d="M8 0V4H12" fill="#fff" opacity="0.7"/><path d="M4.3 7.5L2.8 9.2 4.3 10.9M7.7 7.5L9.2 9.2 7.7 10.9" stroke="#fff" stroke-width="1.1" fill="none"/></svg>
  <div class="a" style="left:487.9px;top:570px;font-size:14px;line-height:16px;letter-spacing:0.43px;color:#333238;">pom.xml</div>
  <div class="a" style="left:1695px;top:877px;font-size:10px;line-height:12px;letter-spacing:-0.6px;color:#999">CSDN @hhzz</div>
</div>

</body></html>
